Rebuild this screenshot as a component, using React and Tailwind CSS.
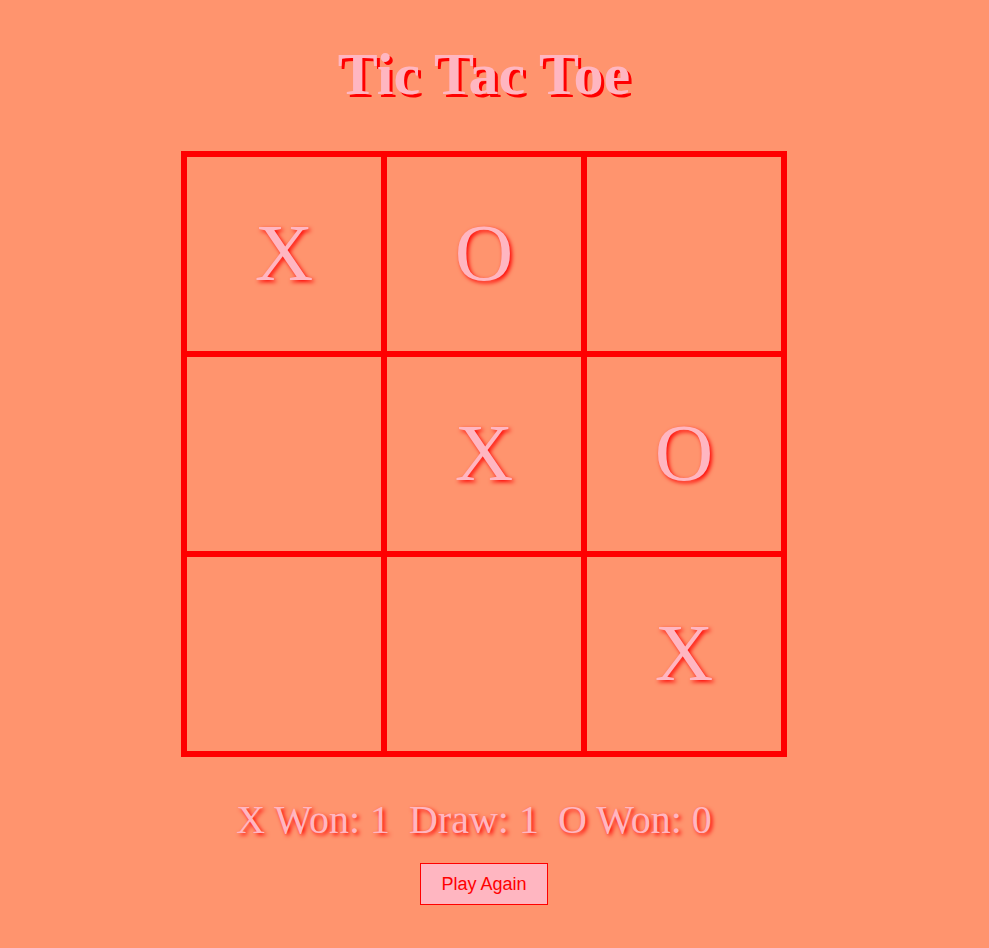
import React, { useState } from "react";

const initial = ["X", "O", "", "", "X", "O", "", "", "X"];

export default function App() {
  const [board, setBoard] = useState(initial);
  const [score] = useState({ x: 1, draw: 1, o: 0 });

  return (
    <div className="min-h-screen w-full bg-[#ff946e]">
      <div className="w-[968px] flex flex-col items-center pt-[44px] pb-10 font-['Liberation_Serif',serif]">
        {/* Title */}
        <h1 className="text-[60px] leading-none font-bold text-[#ffb6c1] [text-shadow:3px_3px_0_#ff0000]">
          Tic Tac Toe
        </h1>

        {/* Board */}
        <div className="mt-[47px] grid grid-cols-3 border-[3px] border-[#ff0000]">
          {board.map((v, i) => (
            <div
              key={i}
              onClick={() => setBoard((b) => b.map((c, j) => (j === i && !c ? "X" : c)))}
              className="w-[200px] h-[200px] border-[3px] border-[#ff0000] flex items-center justify-center text-[81px] text-[#ffb6c1] [text-shadow:2px_2px_4px_#ff0000] cursor-pointer"
            >
              {v}
            </div>
          ))}
        </div>

        {/* Scores */}
        <div className="mt-[43px] mr-[20px] flex gap-[19px] text-[40px] leading-none text-[#ffb6c1] [text-shadow:2px_2px_4px_#ff0000]">
          <span>X Won: {score.x}</span>
          <span>Draw: {score.draw}</span>
          <span>O Won: {score.o}</span>
        </div>

        <button
          onClick={() => setBoard(Array(9).fill(""))}
          className="mt-[23px] h-[42px] px-5 border border-[#ff0000] bg-[#ffb6c1] text-[#ff0000] text-[18px] font-['Liberation_Sans',Arial,sans-serif]"
        >
          Play Again
        </button>
      </div>
    </div>
  );
}
